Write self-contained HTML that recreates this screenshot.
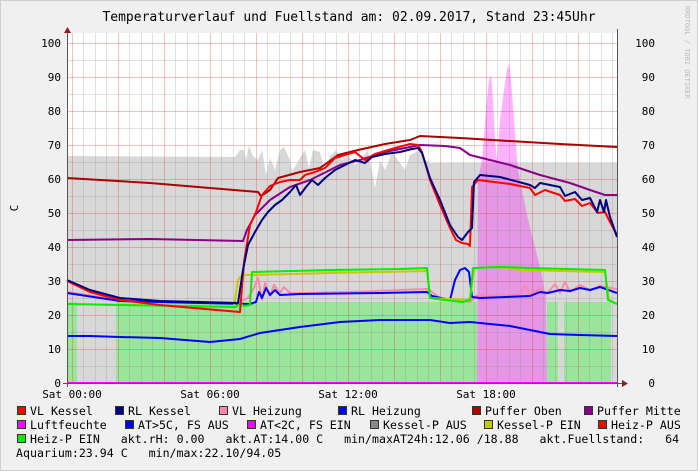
<!DOCTYPE html>
<html><head><meta charset="utf-8"><style>
html,body{margin:0;padding:0;background:#f0f0f0;}
svg{display:block;font-family:"DejaVu Sans Mono","Liberation Mono",monospace;}
.lg text{white-space:pre;}
</style></head><body>
<svg width="698" height="471" viewBox="0 0 698 471" xmlns="http://www.w3.org/2000/svg">
<rect x="0" y="0" width="698" height="471" fill="#f0f0f0"/>
<rect x="0.5" y="0.5" width="697" height="470" fill="none" stroke="#cfcfcf"/>
<text x="349" y="21" font-size="13" text-anchor="middle" fill="#000">Temperaturverlauf und Fuellstand am: 02.09.2017, Stand 23:45Uhr</text>
<text transform="translate(685,6) rotate(90)" font-size="7" fill="#bbb">RRDTOOL / TOBI OETIKER</text>
<rect x="67" y="33" width="550" height="350" fill="#fff"/>
<path d="M67,383 L67,156 L235,157 L240,150 L244,150 L246,160 L249,146 L253,156 L258,160 L262,150 L266,175 L270,158 L275,170 L280,150 L284,147 L290,160 L292,172 L296,165 L300,158 L305,150 L309,168 L313,150 L320,152 L325,175 L330,156 L336,150 L342,160 L348,155 L355,165 L362,158 L368,150 L375,188 L380,160 L385,170 L392,152 L398,160 L405,170 L410,155 L420,150 L425,160 L430,163 L617,163 L617,383 Z" fill="#d8d8d8"/>
<path d="M67,383 L67,302 L77,302 L77,383 Z M116,383 L116,302 L477,302 L477,383 Z M547,383 L547,302 L558,302 L558,383 Z M564,383 L564,302 L611,302 L611,383 Z" fill="#9be49b"/>
<path d="M477,383 L478,180 L482,160 L486,110 L489,80 L491,75 L493,100 L495,140 L497,160 L500,120 L504,90 L507,70 L509,63 L511,80 L514,120 L518,170 L522,190 L527,215 L532,235 L537,255 L542,275 L546,300 L547,383 Z" fill="#ff00ff" fill-opacity="0.3"/>
<g stroke="#888" stroke-opacity="0.25" stroke-width="1">
<path d="M67,366.5H617M67,332.5H617M67,298.5H617M67,264.5H617M67,230.5H617M67,196.5H617M67,162.5H617M67,128.5H617M67,94.5H617M67,60.5H617"/>
<path d="M83.5,33V383M95.5,33V383M106.5,33V383M129.5,33V383M141.5,33V383M152.5,33V383M175.5,33V383M187.5,33V383M198.5,33V383M221.5,33V383M233.5,33V383M244.5,33V383M267.5,33V383M279.5,33V383M290.5,33V383M313.5,33V383M325.5,33V383M336.5,33V383M359.5,33V383M371.5,33V383M382.5,33V383M405.5,33V383M417.5,33V383M428.5,33V383M451.5,33V383M463.5,33V383M474.5,33V383M497.5,33V383M509.5,33V383M520.5,33V383M543.5,33V383M555.5,33V383M566.5,33V383M589.5,33V383M601.5,33V383M612.5,33V383"/>
</g>
<g stroke="#e03030" stroke-opacity="0.3" stroke-width="1">
<path d="M67,349.5H617M67,315.5H617M67,281.5H617M67,247.5H617M67,213.5H617M67,179.5H617M67,145.5H617M67,111.5H617M67,77.5H617M67,43.5H617"/>
<path d="M72.5,33V383M118.5,33V383M164.5,33V383M210.5,33V383M256.5,33V383M302.5,33V383M348.5,33V383M394.5,33V383M440.5,33V383M486.5,33V383M532.5,33V383M578.5,33V383"/>
</g>
<g fill="none" stroke-width="2" stroke-linejoin="round">
<polyline stroke="#0000ff" points="67,336 90,336 120,337 160,338 210,342 240,339 260,333 300,327 340,322 380,320 430,320 450,323 470,322 490,324 510,326 530,330 550,334 580,335 617,336"/>
<polyline stroke="#ff88aa" points="67,292 120,300 200,303 237,303 248,298 254,288 258,278 262,300 265,283 270,296 274,285 280,293 284,287 290,293 300,293 350,292 400,290 428,289 440,298 470,302 476,296 500,295 520,294 525,285 530,295 540,288 545,295 550,290 555,284 560,293 565,282 570,292 580,285 590,290 600,286 617,289"/>
<polyline stroke="#0000ff" points="67,293 120,301 200,303 250,304 256,302 259,292 262,298 266,288 270,295 275,290 280,295 300,294 380,293 427,292 432,296 450,300 455,280 460,270 465,268 469,272 472,297 480,298 530,296 540,292 548,293 560,290 570,291 580,288 590,290 600,287 617,293"/>
<polyline stroke="#c8c800" points="67,304 234,307 238,280 242,275 255,275 330,273 427,271 430,298 470,300 474,269 490,267 510,268 520,270 560,271 605,272 609,300 617,304"/>
<polyline stroke="#00ee00" points="67,304 236,307 240,303 244,306 250,305 252,272 330,270 400,269 427,268 430,298 445,300 462,302 470,300 473,268 500,267 530,268 605,270 608,300 617,304"/>
<polyline stroke="#aa0000" points="67,178 150,183 258,192 261,196 270,190 278,178 300,172 320,168 338,155 358,150 385,144 410,140 420,136 460,138 510,141 560,144 617,147"/>
<polyline stroke="#880088" points="67,240 150,239 243,241 247,230 255,215 270,200 290,187 310,180 340,165 360,160 385,152 420,145 445,146 460,148 470,155 490,160 510,165 540,175 570,183 590,190 605,195 617,195"/>
<polyline stroke="#ff0000" points="67,281 90,292 120,300 160,305 205,309 240,312 244,262 250,225 256,212 262,195 270,186 280,182 290,180 300,180 305,175 315,172 325,168 335,158 345,155 355,152 365,160 375,154 395,148 410,144 418,145 422,152 430,180 440,205 450,228 456,240 462,243 468,244 470,246 472,187 478,180 510,184 530,188 535,195 545,190 560,195 565,201 575,199 582,206 590,203 598,213 605,212 610,222 617,235"/>
<polyline stroke="#000080" points="67,280 90,290 120,298 160,301 200,302 238,303 243,270 248,245 255,232 262,220 268,212 275,205 282,200 290,192 296,185 300,195 306,187 312,180 318,185 325,178 335,170 345,165 355,160 365,163 372,157 385,154 400,152 412,149 418,148 422,153 430,178 440,200 450,225 458,237 462,240 468,232 472,228 474,182 480,175 500,177 530,185 535,188 540,183 560,187 565,196 575,192 582,200 590,198 597,212 600,200 604,212 606,200 610,217 617,237"/>
</g>
<line x1="67" y1="383" x2="617" y2="383" stroke="#ff00ff" stroke-width="2"/>
<line x1="67.5" y1="29" x2="67.5" y2="387" stroke="#555" stroke-width="1"/>
<line x1="617.5" y1="29" x2="617.5" y2="387" stroke="#555" stroke-width="1"/>
<line x1="63" y1="383.5" x2="622" y2="383.5" stroke="#555" stroke-width="1"/>
<polygon points="64,33 71,33 67.5,27" fill="#8a2020"/>
<polygon points="622,380 622,387 628,383.5" fill="#8a2020"/>
<g font-size="11" fill="#000" text-anchor="end">
<text x="61" y="47">100</text><text x="61" y="81">90</text><text x="61" y="115">80</text><text x="61" y="149">70</text><text x="61" y="183">60</text><text x="61" y="217">50</text><text x="61" y="251">40</text><text x="61" y="285">30</text><text x="61" y="319">20</text><text x="61" y="353">10</text><text x="61" y="387">0</text>
<text x="655" y="47">100</text><text x="655" y="81">90</text><text x="655" y="115">80</text><text x="655" y="149">70</text><text x="655" y="183">60</text><text x="655" y="217">50</text><text x="655" y="251">40</text><text x="655" y="285">30</text><text x="655" y="319">20</text><text x="655" y="353">10</text><text x="655" y="387">0</text>
</g>
<text transform="translate(18,208) rotate(-90)" font-size="11" text-anchor="middle">C</text>
<g font-size="11" fill="#000" text-anchor="middle">
<text x="72" y="398">Sat 00:00</text><text x="210" y="398">Sat 06:00</text><text x="348" y="398">Sat 12:00</text><text x="486" y="398">Sat 18:00</text>
</g>
<g stroke="#333" stroke-width="1">
<rect x="17.5" y="406.5" width="8" height="8" fill="#ff0000"/>
<rect x="115.5" y="406.5" width="8" height="8" fill="#000080"/>
<rect x="219.5" y="406.5" width="8" height="8" fill="#ff88aa"/>
<rect x="338.5" y="406.5" width="8" height="8" fill="#0000ff"/>
<rect x="472.5" y="406.5" width="8" height="8" fill="#aa0000"/>
<rect x="584.5" y="406.5" width="8" height="8" fill="#880088"/>
<rect x="17.5" y="420.5" width="8" height="8" fill="#ff00ff"/>
<rect x="125.5" y="420.5" width="8" height="8" fill="#0000ff"/>
<rect x="247.5" y="420.5" width="8" height="8" fill="#ff00ff"/>
<rect x="370.5" y="420.5" width="8" height="8" fill="#888888"/>
<rect x="484.5" y="420.5" width="8" height="8" fill="#c8c800"/>
<rect x="598.5" y="420.5" width="8" height="8" fill="#ff0000"/>
<rect x="17.5" y="434.5" width="8" height="8" fill="#00ee00"/>
</g>
<g class="lg" font-size="11.6" fill="#000">
<text x="30" y="415">VL Kessel</text>
<text x="128" y="415">RL Kessel</text>
<text x="232" y="415">VL Heizung</text>
<text x="351" y="415">RL Heizung</text>
<text x="485" y="415">Puffer Oben</text>
<text x="597" y="415">Puffer Mitte</text>
<text x="30" y="429">Luftfeuchte</text>
<text x="138" y="429">AT&gt;5C, FS AUS</text>
<text x="260" y="429">AT&lt;2C, FS EIN</text>
<text x="383" y="429">Kessel-P AUS</text>
<text x="497" y="429">Kessel-P EIN</text>
<text x="611" y="429">Heiz-P AUS</text>
<text x="30" y="443">Heiz-P EIN   akt.rH: 0.00   akt.AT:14.00 C   min/maxAT24h:12.06 /18.88   akt.Fuellstand:   64</text>
<text x="16" y="457">Aquarium:23.94 C   min/max:22.10/94.05</text>
</g>
</svg>
</body></html>
